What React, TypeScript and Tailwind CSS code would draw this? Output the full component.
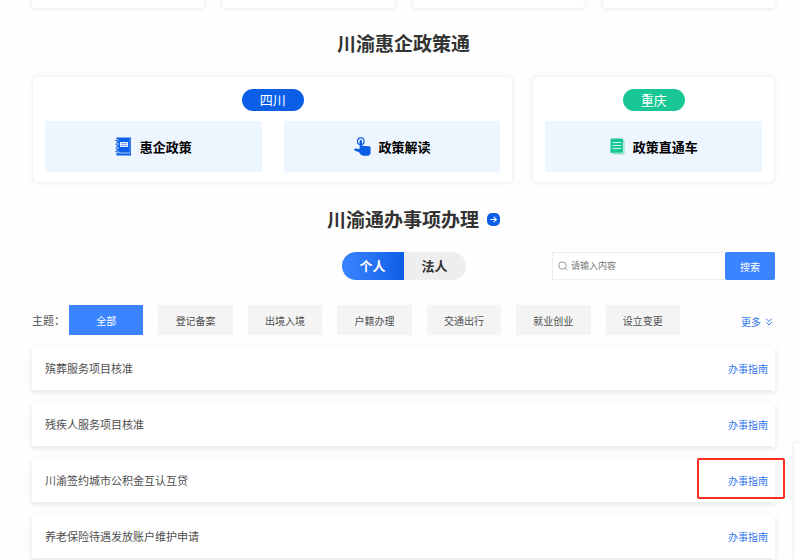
import { ChevronsDown } from "lucide-react";
import React from "react";

const topics = [
  "全部",
  "登记备案",
  "出境入境",
  "户籍办理",
  "交通出行",
  "就业创业",
  "设立变更",
];

const services = [
  { name: "殡葬服务项目核准" },
  { name: "残疾人服务项目核准" },
  { name: "川渝签约城市公积金互认互贷", marked: true },
  { name: "养老保险待遇发放账户维护申请" },
];

const NotebookIcon = () => (
  <svg width="17" height="19" viewBox="0 0 17 19" fill="none">
    <path d="M1.5 0.5h14.5v18H1.5z" fill="#0b5fe6" />
    <path d="M3 16h12" stroke="#bcd6ff" strokeWidth="0.9" />
    <path d="M15 1.5v14.5" stroke="#6ba2f8" strokeWidth="0.8" />
    <path d="M5 5h8v5H5z" fill="#e4efff" />
    <path d="M6 6.6h6M6 8.5h6" stroke="#5b97f5" strokeWidth="0.8" />
    <path
      d="M0.5 3.5h3M0.5 7.2h3M0.5 11h3M0.5 14.7h3"
      stroke="#eef5ff"
      strokeWidth="2"
    />
    <path
      d="M0.3 3.5h2.7M0.3 7.2h2.7M0.3 11h2.7M0.3 14.7h2.7"
      stroke="#0b5fe6"
      strokeWidth="1"
    />
  </svg>
);

const TouchIcon = () => (
  <svg width="17" height="19" viewBox="0 0 17 19" fill="none">
    <circle cx="6.8" cy="4.2" r="3.3" stroke="#0b5fe6" strokeWidth="1.2" />
    <path
      d="M5.6 4.2a1.2 1.2 0 0 1 2.4 0v4.6l7 .4c1 .1 1.6.8 1.6 1.8v4.5c0 2-1 3.2-2.9 3.2H9.5c-1.2 0-2-.4-2.7-1.2L4.6 15 1 13.8c-1.2-.5-.9-2.2.5-2.2l4.1.3z"
      fill="#0b5fe6"
    />
  </svg>
);

const DocumentIcon = () => (
  <svg width="15" height="17" viewBox="0 0 15 17" fill="none">
    <path d="M3 2h10.5a1 1 0 0 1 1 1v12a1.5 1.5 0 0 1-1.5 1.5H3z" fill="#7fdfc0" />
    <rect x="0.5" y="0.5" width="12.5" height="14.8" rx="1.2" fill="#18c795" />
    <path
      d="M2.5 4.5h8.5M2.5 7.5h8.5M2.5 10.5h8.5"
      stroke="#c9f5e6"
      strokeWidth="1"
    />
    <path d="M2 15.2h11.2V4" stroke="#e8fbf5" strokeWidth="0.7" />
  </svg>
);

const ArrowIcon = () => (
  <svg width="13" height="13" viewBox="0 0 13 13" fill="none">
    <rect width="13" height="13" rx="5" fill="#0b5fe6" />
    <path
      d="M3.3 6.5h6M6.7 3.8l2.7 2.7-2.7 2.7"
      stroke="#fff"
      strokeWidth="1.1"
    />
  </svg>
);

const SearchIcon = () => (
  <svg width="10" height="10" viewBox="0 0 10 10" fill="none" stroke="#8c8c8c">
    <circle cx="4.5" cy="4.5" r="3.7" strokeWidth="0.9" />
    <path d="M7.2 7.2l2 2" strokeWidth="0.9" />
  </svg>
);

const PolicyLink = ({
  icon,
  label,
}: {
  icon: React.ReactNode;
  label: string;
}) => (
  <a
    href="#"
    className="flex flex-1 h-[51px] items-center justify-center gap-2 bg-[#edf5ff] text-[13px] font-bold text-black"
  >
    {icon}
    {label}
  </a>
);

const RegionCard = ({
  name,
  color,
  children,
}: {
  name: string;
  color: string;
  children: React.ReactNode;
}) => (
  <div className="flex flex-col items-center rounded border border-[#f3f3f3] bg-white px-3 pt-3 pb-[10px] shadow-[0_0_5px_rgba(0,0,0,0.05)]">
    <span
      className={`flex h-[22px] w-[62px] items-center justify-center rounded-full text-[13px] text-white ${color}`}
    >
      {name}
    </span>
    <div className="mt-[10px] flex w-full gap-[22px]">{children}</div>
  </div>
);

const App = () => {
  return (
    <main
      lang="zh-CN"
      className="min-h-screen bg-[#fefefe] pl-8 pr-[25px] font-['Noto_Sans_CJK_SC',sans-serif] text-[#333]"
    >
      <div className="grid grid-cols-4 gap-[18px]">
        {[1, 2, 3, 4].map((n) => (
          <div
            key={n}
            className="h-2 rounded-b bg-white shadow-[0_0_5px_rgba(0,0,0,0.12)]"
          />
        ))}
      </div>

      <h2 className="mt-[21px] text-center text-[19px] leading-7 font-bold">
        川渝惠企政策通
      </h2>

      <section className="mt-[19px] grid grid-cols-[480fr_242fr] gap-[19px]">
        <RegionCard name="四川" color="bg-[#0b5fe6]">
          <PolicyLink icon={<NotebookIcon />} label="惠企政策" />
          <PolicyLink icon={<TouchIcon />} label="政策解读" />
        </RegionCard>
        <RegionCard name="重庆" color="bg-[#18c795]">
          <PolicyLink icon={<DocumentIcon />} label="政策直通车" />
        </RegionCard>
      </section>

      <div className="mt-[22px] flex items-center justify-center gap-2 pl-5">
        <h2 className="text-[19px] leading-7 font-bold">川渝通办事项办理</h2>
        <a href="#" aria-label="进入">
          <ArrowIcon />
        </a>
      </div>

      <div className="mt-[19px] grid grid-cols-[1fr_auto_1fr] items-center">
        <div className="col-start-2 flex h-7 overflow-hidden rounded-full text-[13px] font-bold">
          <button className="w-[62px] bg-linear-to-r from-[#3a84ff] to-[#0b5fe6] text-white">
            个人
          </button>
          <button className="w-[62px] bg-[#eeeeee]">法人</button>
        </div>
        <form
          className="flex h-7 w-[223px] justify-self-end"
          onSubmit={(e) => e.preventDefault()}
        >
          <label className="flex min-w-0 flex-1 items-center gap-[3px] border border-r-0 border-[#eeeeee] bg-white pl-[5px]">
            <SearchIcon />
            <input
              type="text"
              aria-label="搜索内容"
              placeholder="请输入内容"
              className="min-w-0 flex-1 text-[9px] outline-none placeholder:text-[#757575]"
            />
          </label>
          <button className="w-[50px] rounded-xs bg-[#3a84ff] text-[10px] text-white">
            搜索
          </button>
        </form>
      </div>

      <div className="mt-[25px] flex items-center text-[10px] text-[#4d4d4d]">
        <span className="w-[37px] text-[11px] whitespace-nowrap">主题：</span>
        <div className="flex flex-1 gap-[15px]">
          {topics.map((topic, i) => (
            <button
              key={topic}
              className={`h-[30px] flex-1 ${
                i === 0 ? "bg-[#3a84ff] text-white" : "bg-[#f4f4f4]"
              }`}
            >
              {topic}
            </button>
          ))}
        </div>
        <a
          href="#"
          className="ml-[61px] flex items-center gap-[2px] pt-[3px] text-[#2f76ee]"
        >
          更多
          <ChevronsDown size={12} strokeWidth={2} />
        </a>
      </div>

      <ul className="mt-3 flex flex-col gap-[13px]">
        {services.map((service) => (
          <li
            key={service.name}
            className="relative flex h-[43px] items-center justify-between bg-white pl-[13px] pr-[7px] text-[11px] text-[#4d4d4d] shadow-[0_2px_6px_rgba(0,0,0,0.11)]"
          >
            {service.name}
            <a href="#" className="text-[10px] text-[#2f76ee]">
              办事指南
            </a>
            {service.marked && (
              <div className="pointer-events-none absolute -top-px -right-[10px] h-[41px] w-[88px] rounded-xs border-2 border-[#fb2c20]" />
            )}
          </li>
        ))}
      </ul>

      {/* floating side panel, mostly off screen */}
      <aside className="fixed right-0 bottom-0 h-[117px] w-[6px] bg-white shadow-[0_0_4px_rgba(0,0,0,0.12)]" />
    </main>
  );
};

export default App;
